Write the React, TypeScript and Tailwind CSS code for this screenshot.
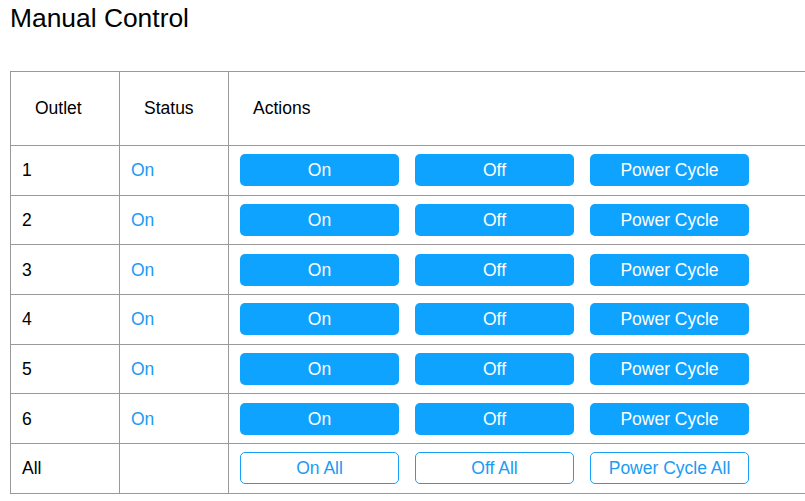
import React from "react";

const outlets = [1, 2, 3, 4, 5, 6];

function Btn({ label, outline }: { label: string; outline?: boolean }) {
  return (
    <button
      className={
        outline
          ? "w-[159px] h-[32px] rounded-[5px] border border-[#16a0f8] bg-white text-[#1a9bf5] text-[17.5px]"
          : "w-[159px] h-[32px] rounded-[5px] bg-[#0ea3fe] text-white text-[17.5px]"
      }
    >
      {label}
    </button>
  );
}

export default function App() {
  return (
    <div className="w-[805px] h-[501px] overflow-hidden bg-white text-black font-['Liberation_Sans',Arial,sans-serif]">
      <h1 className="pl-[10px] text-[26.4px] leading-[36px]">Manual Control</h1>

      <div className="mt-[35px] ml-[10px]">
        <table className="w-[900px] border-collapse text-[17.5px]">
          <thead>
            <tr className="h-[74px]">
              <th className="w-[109px] border border-[#999] pl-[24px] text-left font-normal">Outlet</th>
              <th className="w-[109px] border border-[#999] pl-[24px] text-left font-normal">Status</th>
              <th className="border border-[#999] pl-[24px] text-left font-normal">Actions</th>
            </tr>
          </thead>
          <tbody>
            {outlets.map((n) => (
              <tr key={n} className="h-[49.7px]">
                <td className="border border-[#999] px-[11px]">{n}</td>
                <td className="border border-[#999] px-[11px] text-[#1a9bf5]">On</td>
                <td className="border border-[#999] px-[11px]">
                  <div className="flex gap-[16px]">
                    <Btn label="On" />
                    <Btn label="Off" />
                    <Btn label="Power Cycle" />
                  </div>
                </td>
              </tr>
            ))}
            <tr className="h-[49.7px]">
              <td className="border border-[#999] px-[11px]">All</td>
              <td className="border border-[#999] px-[11px]"></td>
              <td className="border border-[#999] px-[11px]">
                <div className="flex gap-[16px]">
                  <Btn label="On All" outline />
                  <Btn label="Off All" outline />
                  <Btn label="Power Cycle All" outline />
                </div>
              </td>
            </tr>
          </tbody>
        </table>
      </div>
    </div>
  );
}
